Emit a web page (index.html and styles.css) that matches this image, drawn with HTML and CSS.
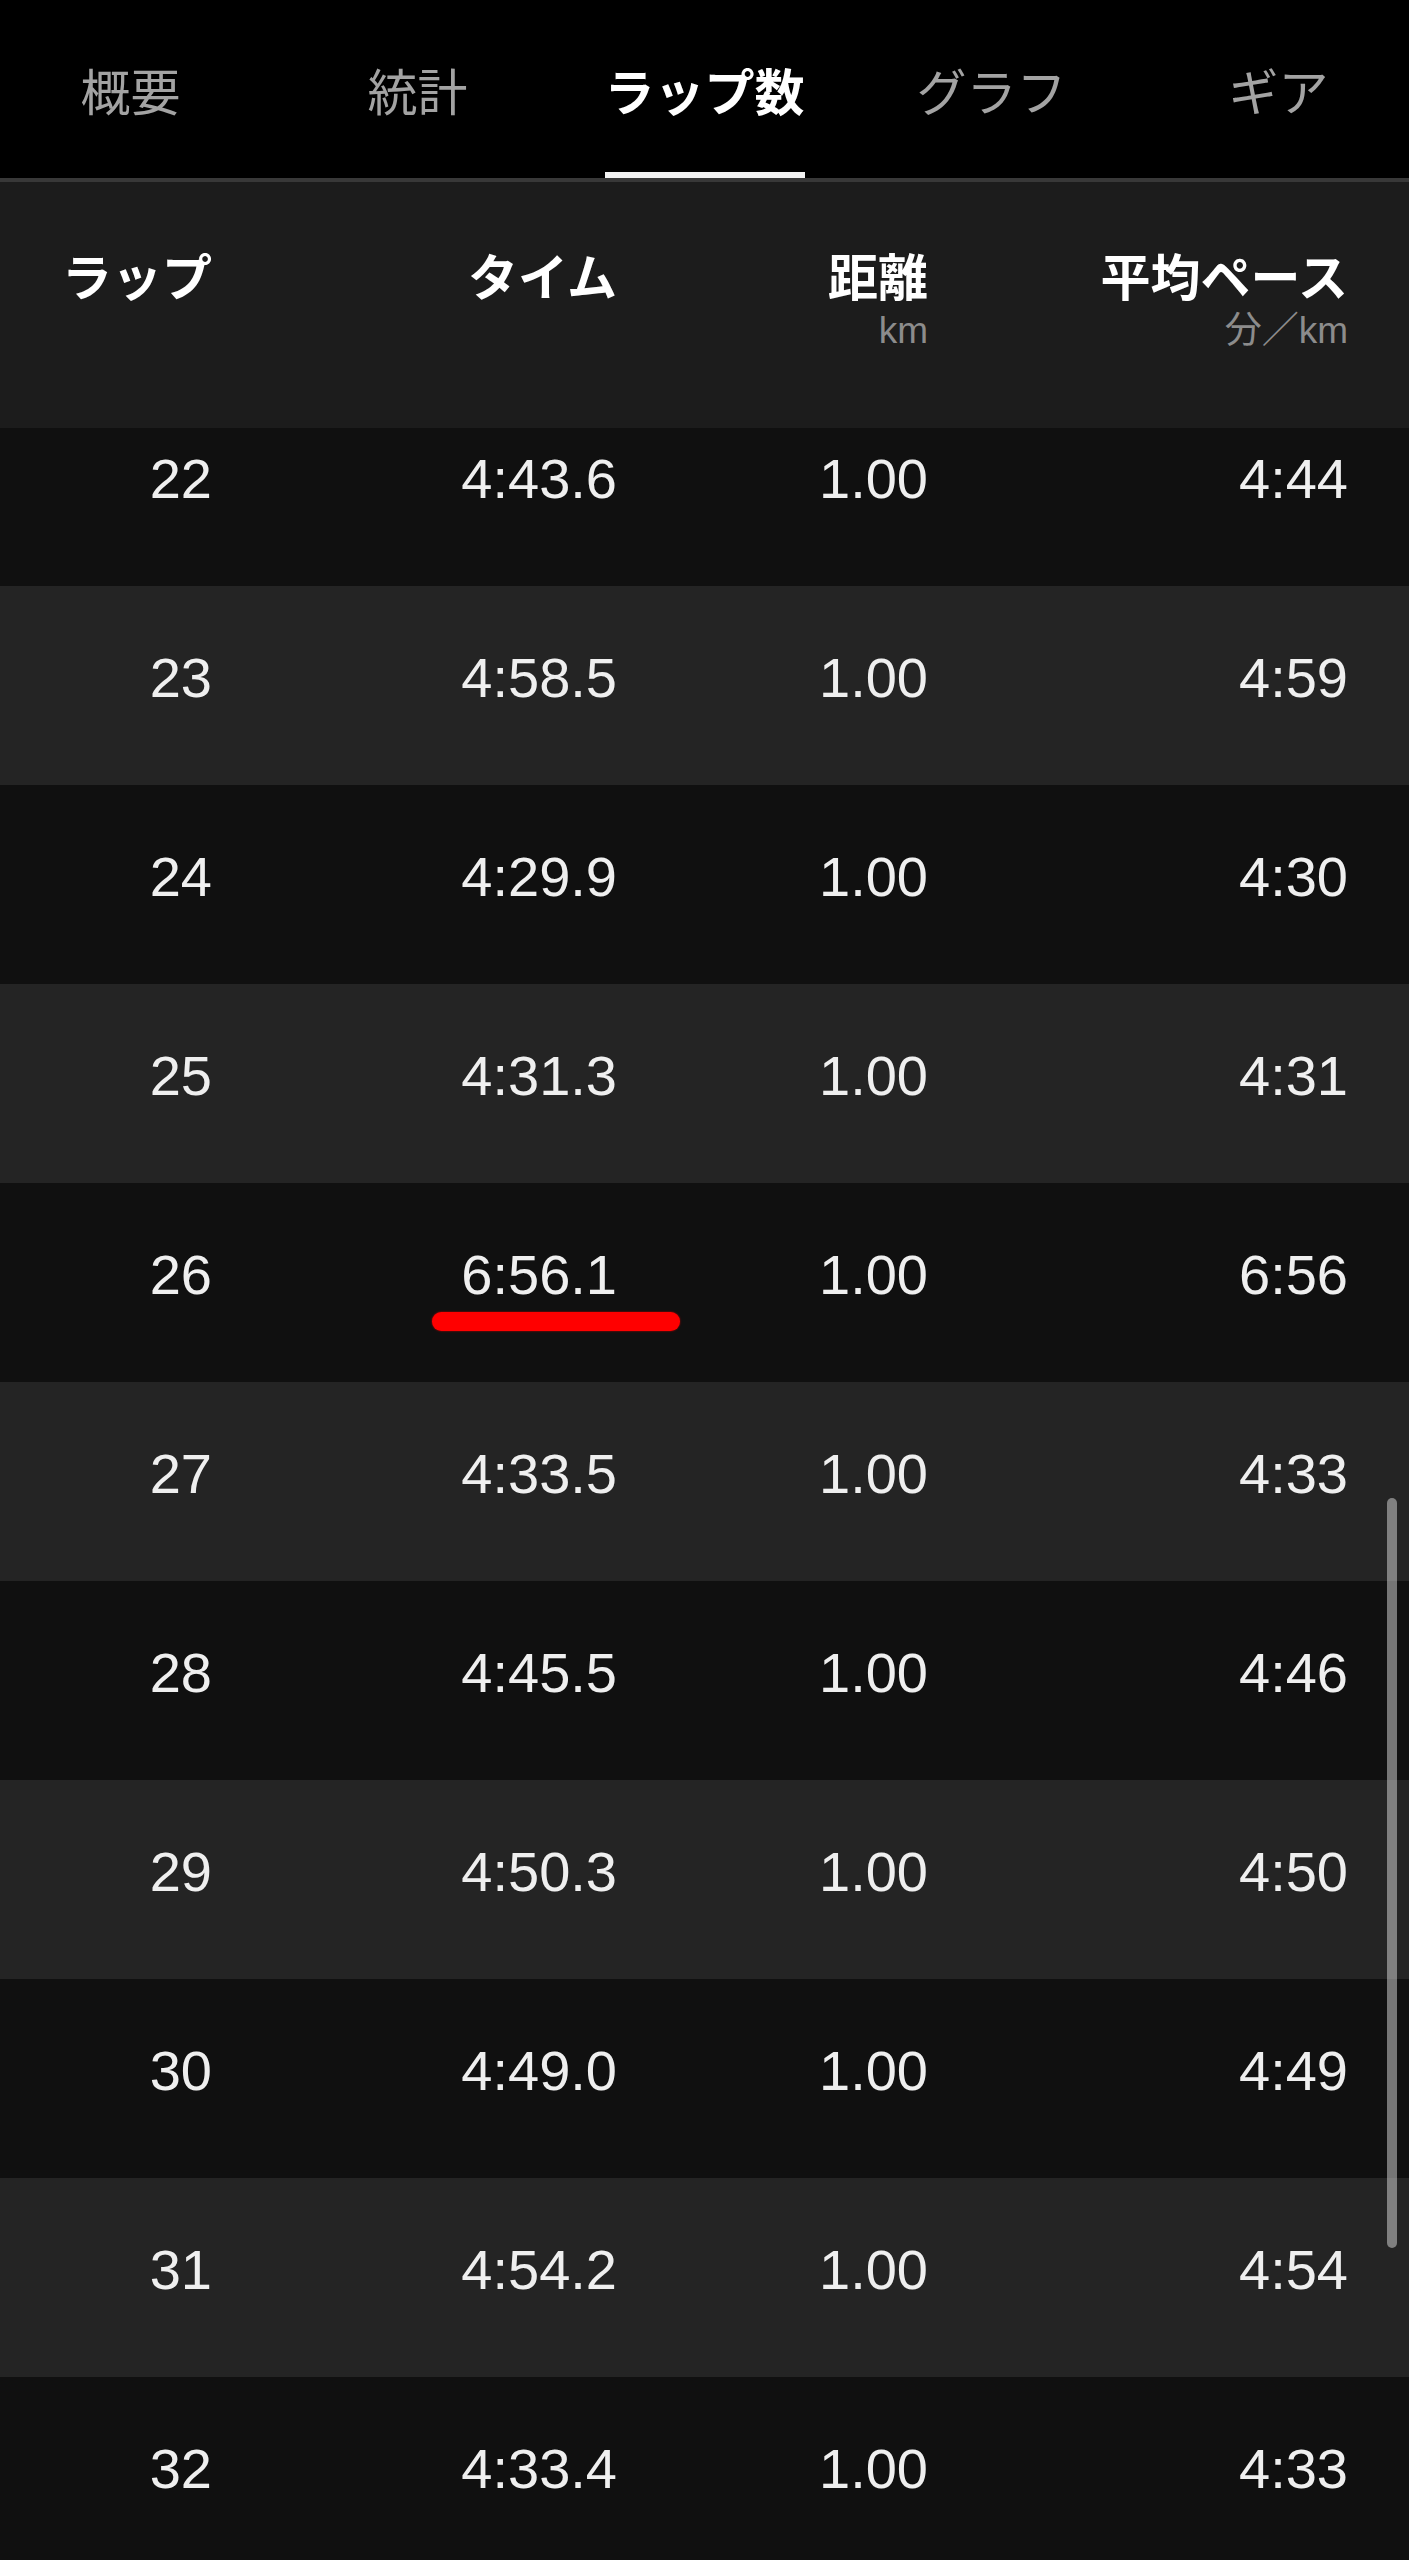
FILE: index.html
```html
<!DOCTYPE html>
<html lang="ja">

<head>
    <meta charset="UTF-8">
    <meta name="viewport" content="width=device-width, initial-scale=1.0">
    <title>ラップ数</title>
    <link rel="stylesheet" href="styles.css">
</head>

<body>
    <nav class="tabs">
        <div class="tab"><span class="tab-label">概要</span></div>
        <div class="tab"><span class="tab-label">統計</span></div>
        <div class="tab"><span class="tab-label tab-active">ラップ数</span></div>
        <div class="tab"><span class="tab-label">グラフ</span></div>
        <div class="tab"><span class="tab-label">ギア</span></div>
    </nav>

    <div class="lap-head">
        <div class="head-cell"><div class="head-title">ラップ</div></div>
        <div class="head-cell"><div class="head-title">タイム</div></div>
        <div class="head-cell">
            <div class="head-title">距離</div>
            <div class="head-unit">km</div>
        </div>
        <div class="head-cell">
            <div class="head-title">平均ペース</div>
            <div class="head-unit">分／km</div>
        </div>
    </div>

    <div class="laps">
        <div class="lap-list">
            <div class="lap-row"><div class="cell">22</div><div class="cell">4:43.6</div><div class="cell">1.00</div><div class="cell">4:44</div></div>
            <div class="lap-row"><div class="cell">23</div><div class="cell">4:58.5</div><div class="cell">1.00</div><div class="cell">4:59</div></div>
            <div class="lap-row"><div class="cell">24</div><div class="cell">4:29.9</div><div class="cell">1.00</div><div class="cell">4:30</div></div>
            <div class="lap-row"><div class="cell">25</div><div class="cell">4:31.3</div><div class="cell">1.00</div><div class="cell">4:31</div></div>
            <div class="lap-row">
                <div class="cell">26</div><div class="cell">6:56.1</div><div class="cell">1.00</div><div class="cell">6:56</div>
                <!-- 手書きの赤線 -->
                <div class="mark"></div>
            </div>
            <div class="lap-row"><div class="cell">27</div><div class="cell">4:33.5</div><div class="cell">1.00</div><div class="cell">4:33</div></div>
            <div class="lap-row"><div class="cell">28</div><div class="cell">4:45.5</div><div class="cell">1.00</div><div class="cell">4:46</div></div>
            <div class="lap-row"><div class="cell">29</div><div class="cell">4:50.3</div><div class="cell">1.00</div><div class="cell">4:50</div></div>
            <div class="lap-row"><div class="cell">30</div><div class="cell">4:49.0</div><div class="cell">1.00</div><div class="cell">4:49</div></div>
            <div class="lap-row"><div class="cell">31</div><div class="cell">4:54.2</div><div class="cell">1.00</div><div class="cell">4:54</div></div>
            <div class="lap-row"><div class="cell">32</div><div class="cell">4:33.4</div><div class="cell">1.00</div><div class="cell">4:33</div></div>
        </div>
    </div>

    <div class="scrollbar"></div>
</body>

</html>
```

FILE: styles.css
```css
body {
    margin: 0;
    background-color: #000;
    color: #efefef;
    font-family: "Liberation Sans", "Noto Sans CJK JP", sans-serif;
    overflow: hidden;
    position: relative;
}

.tabs {
    display: grid;
    grid-template-columns: repeat(5, 287px);
    margin-left: -13px;
    height: 178px;
    background-color: #000;
    border-bottom: 4px solid #383838;
}

.tab {
    text-align: center;
    padding-top: 64px;
}

.tab-label {
    display: inline-block;
    font-family: "Noto Sans CJK JP", sans-serif;
    font-size: 50px;
    line-height: 50px;
    color: #a3a3a3;
    padding-bottom: 58px;
}

.tab-active {
    color: #fff;
    font-weight: 700;
    border-bottom: 6px solid #f2f2f2;
}

.lap-head {
    display: grid;
    grid-template-columns: 212px 405px 311px 420px;
    padding-right: 61px;
    height: 246px;
    box-sizing: border-box;
    padding-top: 67px;
    background-color: #1c1c1c;
}

.head-cell {
    text-align: right;
}

.head-title {
    font-family: "Noto Sans CJK JP", sans-serif;
    font-size: 50px;
    line-height: 50px;
    font-weight: 700;
    color: #fff;
}

.head-unit {
    margin-top: 14px;
    font-size: 37px;
    line-height: 36px;
    color: #8c8c8c;
}

.laps {
    overflow: hidden;
}

.lap-list {
    margin-top: -41px;
}

.lap-row {
    position: relative;
    display: grid;
    grid-template-columns: 212px 405px 311px 420px;
    padding-right: 61px;
    height: 199px;
    box-sizing: border-box;
    padding-top: 60px;
    background-color: #101010;
}

.lap-row:nth-child(even) {
    background-color: #242424;
}

.cell {
    text-align: right;
    font-size: 56px;
    line-height: 64px;
}

.mark {
    position: absolute;
    left: 432px;
    top: 129px;
    width: 248px;
    height: 19px;
    border-radius: 10px;
    background-color: #ff0000;
    box-shadow: 0 0 2px #d00000;
}

.scrollbar {
    position: absolute;
    left: 1387px;
    top: 1498px;
    width: 10px;
    height: 750px;
    border-radius: 5px;
    background-color: rgba(220, 220, 220, 0.5);
}
```
